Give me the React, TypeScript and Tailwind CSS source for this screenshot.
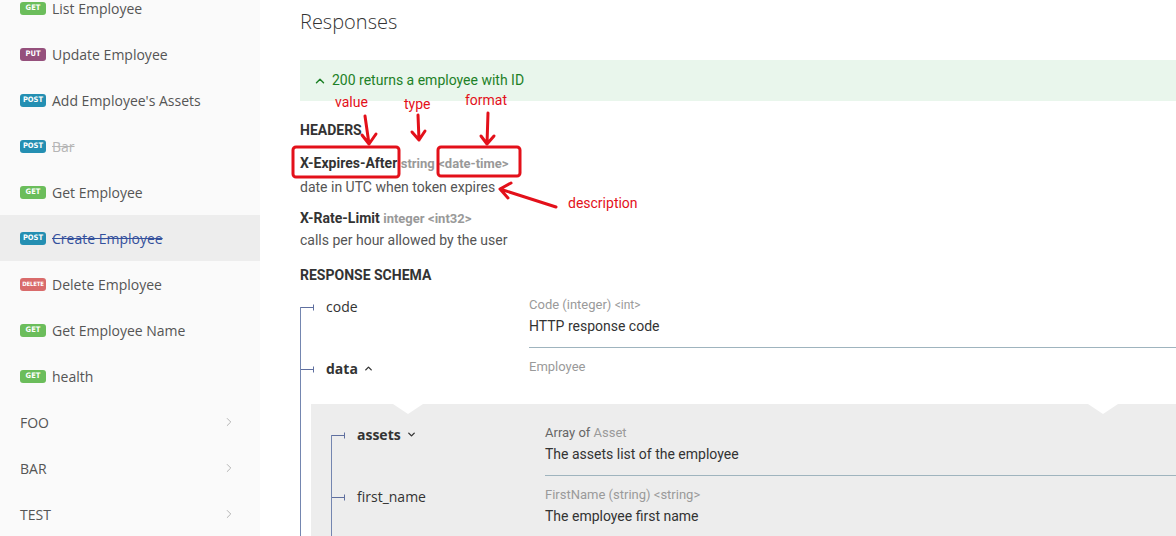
import { ChevronDown, ChevronRight, ChevronUp } from "lucide-react";
import type { ReactNode } from "react";

const badgeColors: Record<string, string> = {
  get: "bg-[#6bbd5b]",
  put: "bg-[#95507c]",
  post: "bg-[#248fb2]",
  delete: "bg-[#d96b6b]",
};

const operations = [
  { method: "get", label: "List Employee" },
  { method: "put", label: "Update Employee" },
  { method: "post", label: "Add Employee's Assets" },
  { method: "post", label: "Bar", deprecated: true },
  { method: "get", label: "Get Employee" },
  { method: "post", label: "Create Employee", deprecated: true, active: true },
  { method: "delete", label: "Delete Employee" },
  { method: "get", label: "Get Employee Name" },
  { method: "get", label: "health" },
];

const tags = ["FOO", "BAR", "TEST"];

const Sidebar = () => {
  return (
    <aside className="w-[260px] shrink-0 bg-[#fafafa] font-['Open_Sans',sans-serif]">
      <ul className="mt-[-15px]">
        {operations.map((op) => (
          <li
            key={op.label}
            className={`flex h-[46px] items-center px-5 ${op.active ? "bg-[#ededed]" : ""}`}
          >
            <span
              className={`flex h-[13px] w-[26px] shrink-0 items-center justify-center rounded-[3px] font-['DejaVu_Sans_Condensed','DejaVu_Sans',sans-serif] font-bold uppercase leading-none text-white ${
                op.method === "delete" ? "text-[6px] tracking-[-0.2px]" : "text-[7.5px]"
              } ${badgeColors[op.method]}`}
            >
              {op.method}
            </span>
            <span
              className={`ml-[6px] text-[14px] ${
                op.active
                  ? "text-[#34509c] line-through"
                  : op.deprecated
                    ? "text-[#b5b5b5] line-through"
                    : "text-[#555]"
              }`}
            >
              {op.label}
            </span>
          </li>
        ))}
        {tags.map((tag) => (
          <li key={tag} className="flex h-[46px] items-center justify-between pl-5 pr-6">
            <span className="text-[14px] text-[#555]">{tag}</span>
            <ChevronRight size={14} strokeWidth={1.5} className="text-[#aaa]" />
          </li>
        ))}
      </ul>
    </aside>
  );
};

const Tick = () => (
  <svg width="13" height="7" viewBox="0 0 13 7" className="mt-[2px] shrink-0">
    <path d="M0 3.5H12.5M12.5 0.5V6.5" stroke="#5f6f9f" strokeWidth="1" fill="none" />
  </svg>
);

type RowProps = {
  name: ReactNode;
  type: ReactNode;
  desc?: string;
  first?: boolean;
  nameWidth: string;
};

const Row = ({ name, type, desc, first, nameWidth }: RowProps) => {
  return (
    <div className="flex">
      <div className="flex w-px shrink-0 flex-col">
        {first && <div className="h-[17px] shrink-0" />}
        <div className="flex-1 bg-[#7486b0]" />
      </div>
      <div className={`flex shrink-0 items-start ${nameWidth}`}>
        <div className={`flex h-5 items-center ${first ? "mt-[6px]" : "mt-[10px]"}`}>
          <Tick />
          <span className="ml-3 font-['Open_Sans',sans-serif] text-[14px] text-[#333]">
            {name}
          </span>
        </div>
      </div>
      <div
        className={`flex-1 border-b border-[#9fb4be] pb-[11px] ${first ? "pt-[7px]" : "pt-[11px]"}`}
      >
        <div className="h-4 text-[13px] leading-4 text-[#9a9a9a]">{type}</div>
        <div className="mt-[3px] h-5 text-[14px] leading-5 text-[#333]">{desc}</div>
      </div>
    </div>
  );
};

const Annotations = () => {
  return (
    <>
      <svg
        className="pointer-events-none absolute left-0 top-0"
        width="1176"
        height="536"
        viewBox="0 0 1176 536"
        fill="none"
        stroke="#e3101a"
        strokeWidth="3"
        strokeLinecap="round"
        strokeLinejoin="round"
      >
        <rect x="293" y="147" width="106" height="30" rx="3" />
        <rect x="438" y="147" width="82" height="29" rx="3" />
        <path d="M365 116L369 144M362 135L369 144L376 134" />
        <path d="M418 115L419 140M412 132L419 140L425 131" />
        <path d="M488 113L487 144M481 136L487 144L494 136" />
        <path d="M556 207L500 189M511 183L500 189L508 198" />
      </svg>
      <span className="absolute left-[335px] top-[93px] font-['Roboto',sans-serif] text-[14px] leading-[18px] text-[#e3101a]">
        value
      </span>
      <span className="absolute left-[404px] top-[95px] font-['Roboto',sans-serif] text-[14px] leading-[18px] text-[#e3101a]">
        type
      </span>
      <span className="absolute left-[465px] top-[91px] font-['Roboto',sans-serif] text-[14px] leading-[18px] text-[#e3101a]">
        format
      </span>
      <span className="absolute left-[568px] top-[194px] font-['Roboto',sans-serif] text-[14px] leading-[18px] text-[#e3101a]">
        description
      </span>
    </>
  );
};

const App = () => {
  return (
    <div className="relative flex h-[536px] w-[1176px] overflow-hidden bg-white font-['Roboto',sans-serif]">
      <Sidebar />
      <main className="min-w-0 flex-1 pl-10">
        <h2 className="pt-2 font-['Open_Sans',sans-serif] text-[20px] font-light leading-7 text-[#333]">
          Responses
        </h2>
        <div className="mt-6 flex h-[41px] items-center bg-[#e9f6ec] px-[13px] text-[14px] text-[#1d8127]">
          <ChevronUp size={14} strokeWidth={2.5} />
          <span className="ml-[5px]">200 returns a employee with ID</span>
        </div>

        <h5 className="mt-5 text-[14px] font-bold uppercase leading-[18px] text-[#333]">
          Headers
        </h5>
        <div className="mt-[13px] text-[14px] leading-[22px]">
          <span className="font-bold text-[#333]">X-Expires-After</span>{" "}
          <span className="text-[13px] font-bold text-[#999]">string</span>{" "}
          <span className="text-[13px] font-bold text-[#999]">&lt;date-time&gt;</span>
        </div>
        <div className="mt-[2px] text-[14px] leading-5 text-[#555]">
          date in UTC when token expires
        </div>
        <div className="mt-[10px] text-[14px] leading-[22px]">
          <span className="font-bold text-[#333]">X-Rate-Limit</span>{" "}
          <span className="text-[13px] font-bold text-[#999]">integer</span>{" "}
          <span className="text-[13px] font-bold text-[#999]">&lt;int32&gt;</span>
        </div>
        <div className="text-[14px] leading-5 text-[#555]">calls per hour allowed by the user</div>

        <h5 className="mt-4 text-[14px] font-bold uppercase leading-[18px] text-[#333]">
          Response Schema
        </h5>

        <div className="mt-[6px]">
          <Row
            first
            nameWidth="w-[228px]"
            name="code"
            type={
              <>
                Code (integer) <span className="text-[12px]">&lt;int&gt;</span>
              </>
            }
            desc="HTTP response code"
          />

          <div className="flex">
            <div className="w-px shrink-0 bg-[#7486b0]" />
            <div className="min-w-0 flex-1">
              <div className="flex h-[56px]">
                <div className="flex w-[228px] shrink-0 items-start">
                  <div className="mt-[10px] flex h-5 items-center">
                    <Tick />
                    <span className="ml-3 font-['Open_Sans',sans-serif] text-[14px] font-bold text-[#333]">
                      data
                    </span>
                    <ChevronUp size={11} strokeWidth={3} className="ml-[5px] text-[#333]" />
                  </div>
                </div>
                <div className="pt-[11px] text-[13px] leading-4 text-[#9a9a9a]">Employee</div>
              </div>

              <div className="relative ml-[10px] bg-[#ededed] pl-5 pt-[14px]">
                <div className="absolute left-[82px] top-0 h-0 w-0 border-x-[15px] border-t-[10px] border-x-transparent border-t-white" />
                <div className="absolute left-[777px] top-0 h-0 w-0 border-x-[15px] border-t-[10px] border-x-transparent border-t-white" />
                <Row
                  first
                  nameWidth="w-[213px]"
                  name={
                    <span className="flex items-center font-bold">
                      assets
                      <ChevronDown size={11} strokeWidth={3} className="ml-[5px]" />
                    </span>
                  }
                  type={
                    <>
                      <span className="text-[#666]">Array of</span> Asset
                    </>
                  }
                  desc="The assets list of the employee"
                />
                <Row
                  nameWidth="w-[213px]"
                  name="first_name"
                  type="FirstName (string) <string>"
                  desc="The employee first name"
                />
              </div>
            </div>
          </div>
        </div>
      </main>
      <Annotations />
    </div>
  );
};

export default App;
